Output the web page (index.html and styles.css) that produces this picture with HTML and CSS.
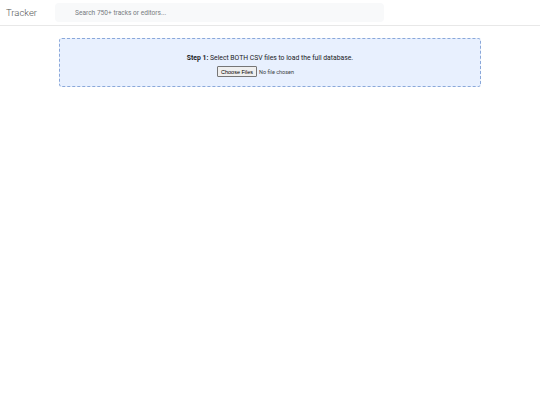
FILE: index.html
```html
<!DOCTYPE html>
<html>
<head>
<meta charset="utf-8">
<link rel="stylesheet" href="styles.css">
</head>
<body>
<header class="topbar">
  <div class="brand">Tracker</div>
  <input class="search" type="text" placeholder="Search 750+ tracks or editors...">
</header>
<main class="main">
  <section class="upload">
    <p class="upload-text"><strong>Step 1:</strong> Select BOTH CSV files to load the full database.</p>
    <input class="file-input" type="file" multiple>
  </section>
</main>
</body>
</html>
```
FILE: styles.css
```css
* { box-sizing: border-box; }
html, body { margin: 0; padding: 0; background: #ffffff; }
body { font-family: Roboto, "Liberation Sans", sans-serif; color: #202124; }
.topbar {
  display: flex;
  align-items: center;
  height: 26px;
  padding: 0 6px;
  border-bottom: 1px solid #e8e8e8;
  gap: 18px;
}
.brand {
  font-size: 9.5px;
  font-weight: 300;
  color: #555555;
  width: 31px;
}
.search {
  width: 329px;
  height: 19px;
  border: none;
  border-radius: 4px;
  background: #f8f9fa;
  padding: 0 20px;
  font-family: Roboto, "Liberation Sans", sans-serif;
  font-size: 6.6px;
  color: #5f6368;
  outline: none;
}
.search::placeholder { color: #777b80; }
.main {
  padding: 12px 59px 0 59px;
}
.upload {
  width: 422px;
  height: 49px;
  border: 1px dashed #8aa8da;
  border-radius: 3px;
  background: #e8f0fe;
  display: flex;
  flex-direction: column;
  align-items: center;
  justify-content: center;
  gap: 4px;
  padding-top: 6px;
}
.upload-text {
  margin: 0;
  font-size: 6.8px;
  color: #202124;
}
.upload-text strong { font-weight: 700; }
.file-input {
  font-family: Roboto, "Liberation Sans", sans-serif;
  font-size: 5.5px;
  color: #3c4043;
}
.file-input::file-selector-button {
  font-size: 5.5px;
  padding: 1.5px 3px;
  margin-right: 2px;
  border: 1px solid #767676;
  border-radius: 1px;
  background: #efefef;
  color: #000;
}
```
